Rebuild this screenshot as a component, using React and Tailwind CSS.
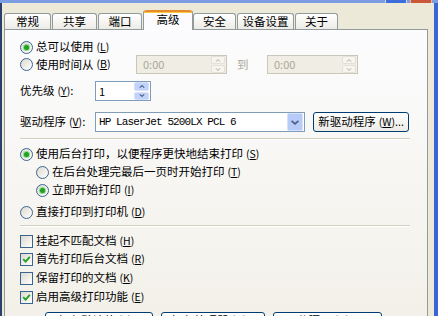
import React from "react";

const FONT = "font-['Noto_Sans_CJK_SC','Noto_Sans_CJK_JP',sans-serif]";

function Key({ k, dots }) {
  return (
    <span className="ml-[3px] text-[10.5px]">
      (<span className="underline underline-offset-1">{k}</span>){dots ? "..." : ""}
    </span>
  );
}

function Radio({ checked }) {
  return (
    <span className="flex h-[13px] w-[13px] shrink-0 items-center justify-center rounded-full border border-[#3A6592] bg-linear-to-br from-[#DCD9CE] to-white">
      {checked && (
        <span className="h-[5px] w-[5px] rounded-full bg-[#21A121] shadow-[0_0_0_1px_#8CD88C]" />
      )}
    </span>
  );
}

function Check({ checked }) {
  return (
    <span className="flex h-[13px] w-[13px] shrink-0 items-center justify-center border border-[#3A6592] bg-linear-to-br from-[#DCD9CE] to-white">
      {checked && (
        <svg width="9" height="9" viewBox="0 0 9 9">
          <path d="M1.2 4.2 L3.6 6.6 L7.8 1.8" stroke="#21A121" strokeWidth="1.8" fill="none" />
        </svg>
      )}
    </span>
  );
}

function Arrow({ up, color, w = 7, h = 4 }) {
  return (
    <svg width={w} height={h} viewBox="0 0 7 4">
      <path
        d={up ? "M0.5 3.5 L3.5 0.8 L6.5 3.5" : "M0.5 0.5 L3.5 3.2 L6.5 0.5"}
        stroke={color}
        strokeWidth="1.5"
        fill="none"
      />
    </svg>
  );
}

function DisabledSpin() {
  return (
    <div className="flex h-[19px] w-[91px] items-center border border-[#C9C7BA] bg-[#F0EEE4]">
      <span className="flex-1 pl-[6px] text-[11px] text-[#ACA899]">0:00</span>
      <div className="mr-[1px] flex h-[17px] w-[14px] flex-col gap-[1px]">
        <div className="flex flex-1 items-center justify-center rounded-[2px] border border-[#E4E2D8] bg-[#F6F5F0]">
          <Arrow up color="#C9C7BA" w={6} h={3} />
        </div>
        <div className="flex flex-1 items-center justify-center rounded-[2px] border border-[#E4E2D8] bg-[#F6F5F0]">
          <Arrow color="#C9C7BA" w={6} h={3} />
        </div>
      </div>
    </div>
  );
}

function Tab({ label, w, selected }) {
  if (selected) {
    return (
      <div
        className={`relative z-10 -mb-px flex h-[20px] ${w} shrink-0 flex-col rounded-t-[3px] border-x border-[#919B9C] bg-[#FCFCFE]`}
      >
        <div className="h-[3px] rounded-t-[3px] border-t-2 border-[#E68B2C] bg-[#FFC73C]" />
        <div className="flex flex-1 items-center justify-center pb-[3px]">{label}</div>
      </div>
    );
  }
  return (
    <div
      className={`flex h-[16px] ${w} shrink-0 items-center justify-center rounded-t-[3px] border border-b-0 border-[#919B9C] bg-linear-to-b from-white to-[#ECEBE6]`}
    >
      {label}
    </div>
  );
}

function Button({ children, w, h = "h-[20px]", top }) {
  return (
    <div
      className={`flex ${h} ${w} shrink-0 justify-center rounded-[3px] border border-[#003C74] bg-linear-to-b from-white to-[#ECEBE6] ${top ? "items-start pt-[2px]" : "items-center"}`}
    >
      {children}
    </div>
  );
}

export default function App() {
  return (
    <div
      className={`flex h-[316px] w-[438px] flex-col overflow-hidden bg-[#ECE9D8] text-[11.5px] leading-none text-black ${FONT}`}
    >
      {/* title bar bottom */}
      <div className="flex h-[3px] shrink-0">
        <div className="flex-1 bg-[#7C9DE2]" />
        <div className="w-[22px] border-x border-[#C9D6F5] bg-[#3D6CDB]" />
        <div className="w-[3px] bg-[#7C9DE2]" />
        <div className="w-[22px] border-x border-[#E9B3A5] bg-[#C9583A]" />
        <div className="w-[6px] bg-[#7C9DE2]" />
      </div>
      <div className="flex flex-1">
        <div className="w-[2px] shrink-0 bg-[#2B3F6B]" />
        <div className="flex flex-1 flex-col pl-[2px] pr-[6px]">
          {/* tabs */}
          <div className="flex h-[26px] shrink-0 items-end">
            <Tab label="常规" w="w-[47px]" />
            <div className="w-[1px]" />
            <Tab label="共享" w="w-[45px]" />
            <div className="w-[1px]" />
            <Tab label="端口" w="w-[44px]" />
            <div className="w-[1px]" />
            <Tab label="高级" w="w-[50px]" selected />
            <Tab label="安全" w="w-[43px]" />
            <div className="w-[1px]" />
            <Tab label="设备设置" w="w-[57px]" />
            <div className="w-[1px]" />
            <Tab label="关于" w="w-[43px]" />
          </div>
          {/* panel */}
          <div className="flex h-[320px] shrink-0 flex-col border border-[#919B9C] bg-linear-to-b from-[#FCFCFE] to-[#F1EFE6] pl-[15px] pt-[9px]">
            <div className="flex h-[16px] items-center">
              <Radio checked />
              <span className="ml-[3px]">总可以使用</span>
              <Key k="L" />
            </div>
            <div className="flex h-[19px] items-center">
              <div className="flex w-[116px] shrink-0 items-center">
                <Radio />
                <span className="ml-[3px]">使用时间从</span>
                <Key k="B" />
              </div>
              <DisabledSpin />
              <span className="w-[40px] shrink-0 pl-[10px] text-[#ACA899]">到</span>
              <DisabledSpin />
            </div>
            <div className="mt-[7px] flex h-[20px] items-center">
              <div className="flex w-[75px] shrink-0 items-center">
                <span>优先级</span>
                <Key k="Y" />
                <span>:</span>
              </div>
              <div className="flex h-[20px] w-[56px] items-center border border-[#7F9DB9] bg-white">
                <span className="flex-1 pl-[3px] text-[11px]">1</span>
                <div className="mr-[1px] flex h-[18px] w-[15px] flex-col gap-[1px]">
                  <div className="flex flex-1 items-center justify-center rounded-[2px] border border-[#D6E0F8] bg-[#C1D3FB]">
                    <Arrow up color="#4D6185" w={6} h={3} />
                  </div>
                  <div className="flex flex-1 items-center justify-center rounded-[2px] border border-[#D6E0F8] bg-[#C1D3FB]">
                    <Arrow color="#4D6185" w={6} h={3} />
                  </div>
                </div>
              </div>
            </div>
            <div className="mt-[11px] flex h-[20px] items-center">
              <div className="flex w-[75px] shrink-0 items-center">
                <span>驱动程序</span>
                <Key k="V" />
                <span>:</span>
              </div>
              <div className="flex h-[20px] w-[210px] shrink-0 items-center border border-[#7F9DB9] bg-white">
                <span className="flex-1 pl-[3px] font-['Liberation_Mono',monospace] text-[11px] tracking-[-0.9px]">
                  HP LaserJet 5200LX PCL 6
                </span>
                <div className="mr-[1px] flex h-[18px] w-[16px] items-center justify-center rounded-[2px] border border-[#D6E0F8] bg-[#B6CBF8]">
                  <Arrow color="#4D6185" w={8} h={5} />
                </div>
              </div>
              <div className="ml-[8px]">
                <Button w="w-[96px]">
                  <span>新驱动程序</span>
                  <Key k="W" dots />
                </Button>
              </div>
            </div>
            <div className="mt-[6px] h-[2px] w-[390px] border-t border-b border-t-[#D0D0BF] border-b-white" />
            <div className="mt-[6px] flex h-[16px] items-center">
              <Radio checked />
              <span className="ml-[3px]">使用后台打印，以便程序更快地结束打印</span>
              <Key k="S" />
            </div>
            <div className="ml-[16px] mt-[2px] flex h-[16px] items-center">
              <Radio />
              <span className="ml-[3px]">在后台处理完最后一页时开始打印</span>
              <Key k="T" />
            </div>
            <div className="ml-[16px] mt-[2px] flex h-[16px] items-center">
              <Radio checked />
              <span className="ml-[3px]">立即开始打印</span>
              <Key k="I" />
            </div>
            <div className="mt-[6px] flex h-[16px] items-center">
              <Radio />
              <span className="ml-[3px]">直接打印到打印机</span>
              <Key k="D" />
            </div>
            <div className="mt-[5px] h-[2px] w-[390px] border-t border-b border-t-[#D0D0BF] border-b-white" />
            <div className="mt-[6px] flex h-[16px] items-center">
              <Check />
              <span className="ml-[3px]">挂起不匹配文档</span>
              <Key k="H" />
            </div>
            <div className="mt-[2px] flex h-[16px] items-center">
              <Check checked />
              <span className="ml-[3px]">首先打印后台文档</span>
              <Key k="R" />
            </div>
            <div className="mt-[3px] flex h-[16px] items-center">
              <Check />
              <span className="ml-[3px]">保留打印的文档</span>
              <Key k="K" />
            </div>
            <div className="mt-[3px] flex h-[16px] items-center">
              <Check checked />
              <span className="ml-[3px]">启用高级打印功能</span>
              <Key k="E" />
            </div>
            <div className="ml-[25px] mt-[7px] flex gap-[8px]">
              <Button w="w-[108px]" h="h-[23px]" top>
                <span>打印默认值</span>
                <Key k="F" dots />
              </Button>
              <Button w="w-[104px]" h="h-[23px]" top>
                <span>打印处理器</span>
                <Key k="N" dots />
              </Button>
              <Button w="w-[109px]" h="h-[23px]" top>
                <span>分隔页</span>
                <Key k="O" dots />
              </Button>
            </div>
          </div>
        </div>
        <div className="w-[4px] shrink-0 bg-[#3A66D4]" />
      </div>
    </div>
  );
}
